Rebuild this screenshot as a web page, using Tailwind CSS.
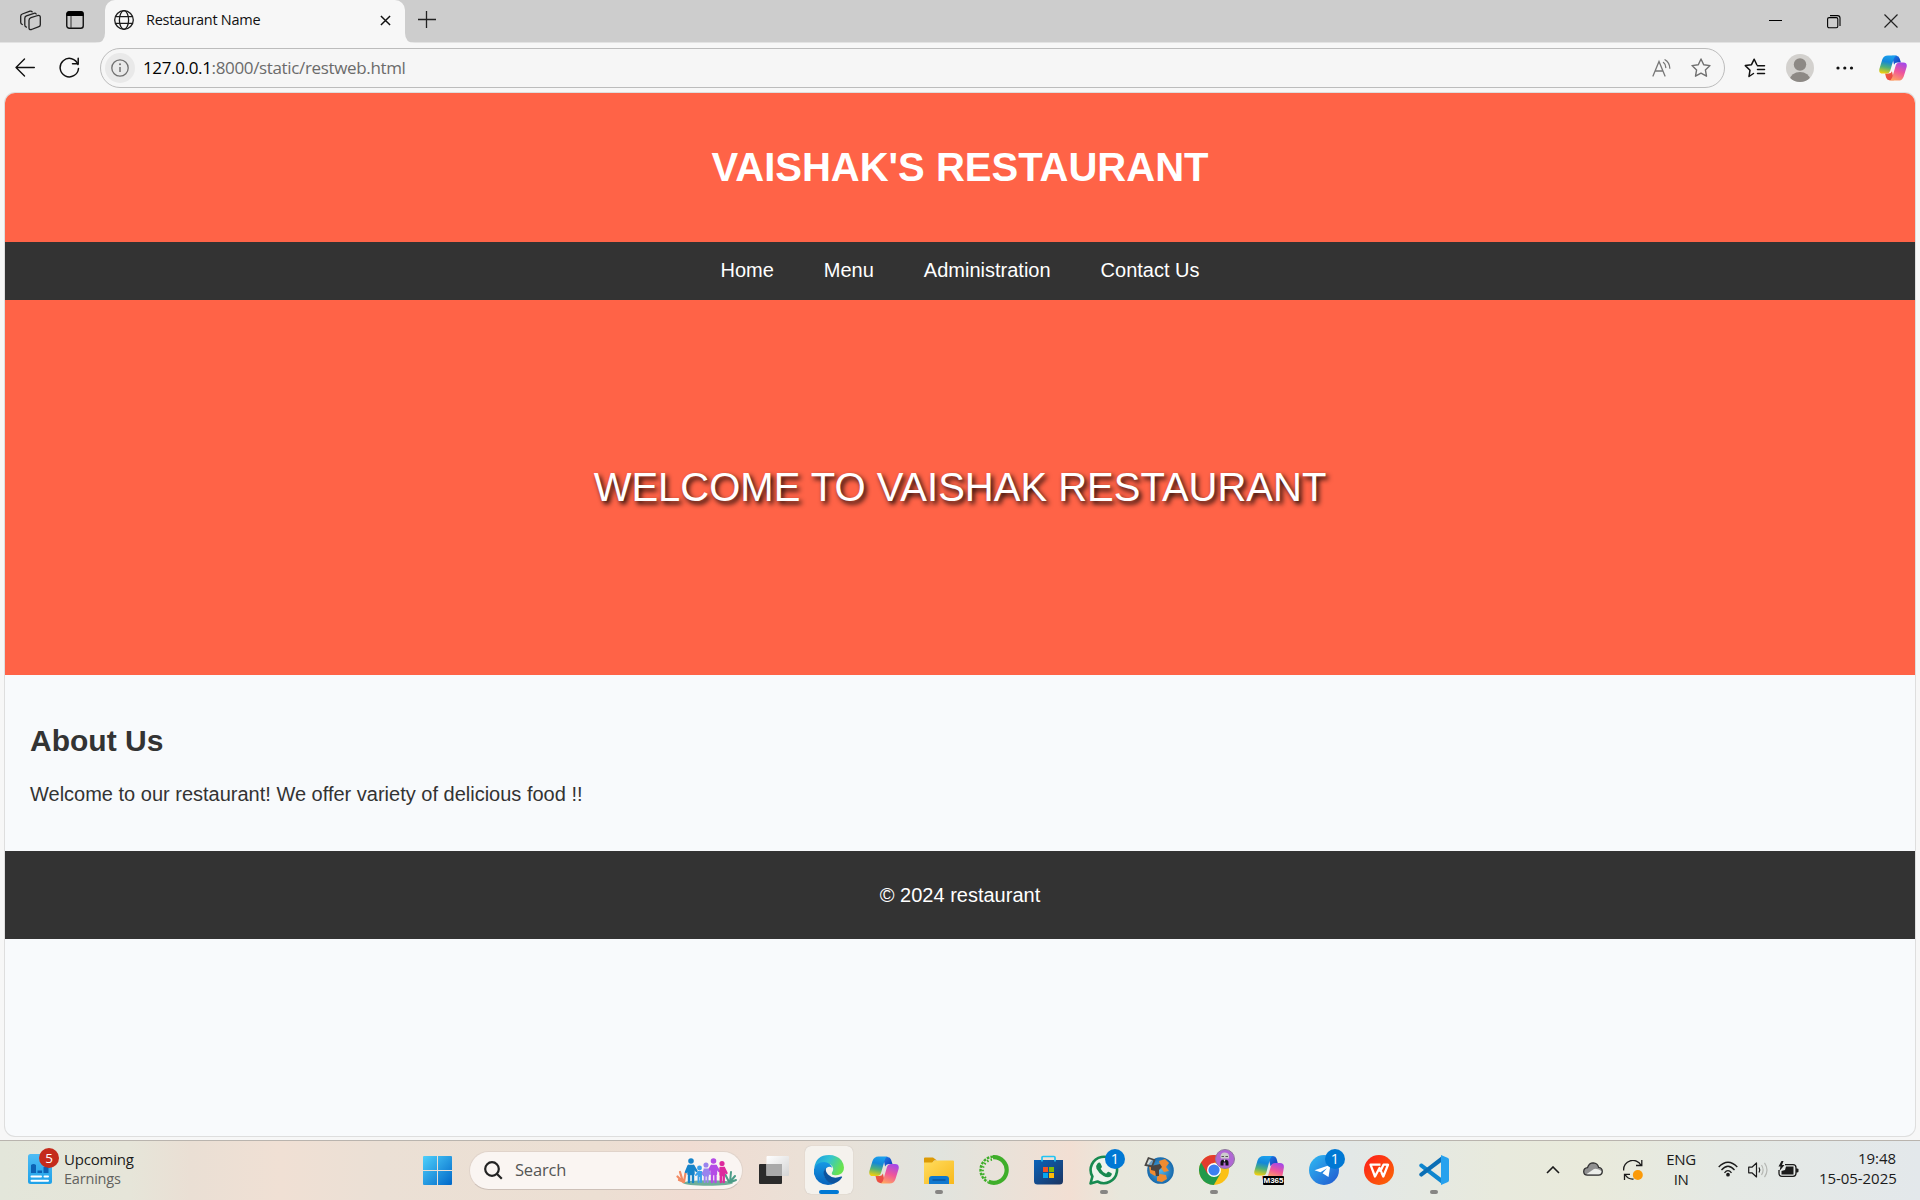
<!DOCTYPE html>
<html lang="en">
<head>
<meta charset="utf-8">
<title>Restaurant Name</title>
<script src="https://cdn.jsdelivr.net/npm/@tailwindcss/browser@4"></script>
</head>
<body class="w-[1920px] h-[1200px] overflow-hidden bg-[#f7f7f7] flex flex-col font-['Open_Sans','Noto_Sans',sans-serif]">

<!-- Shared gradients and symbols -->
<svg width="0" height="0" class="absolute">
  <defs>
    <linearGradient id="cpA" x1=".5" y1="0" x2=".3" y2="1"><stop offset="0" stop-color="#1aa0ee"/><stop offset=".35" stop-color="#1487d8"/><stop offset=".65" stop-color="#4fb079"/><stop offset="1" stop-color="#f4d00c"/></linearGradient>
    <linearGradient id="cpB" x1=".7" y1="0" x2=".3" y2="1"><stop offset="0" stop-color="#a548e8"/><stop offset=".5" stop-color="#f0569a"/><stop offset="1" stop-color="#ffa45f"/></linearGradient>
    <linearGradient id="cpC" x1="0" y1="0" x2="1" y2="1"><stop offset="0" stop-color="#1e7fe8"/><stop offset="1" stop-color="#1136b8"/></linearGradient>
    <linearGradient id="cpD" x1="0" y1="0" x2="1" y2="1"><stop offset="0" stop-color="#f0603a"/><stop offset="1" stop-color="#e8434a"/></linearGradient>
    <linearGradient id="win" x1="0" y1="0" x2="1" y2="1"><stop offset="0" stop-color="#4fd0fb"/><stop offset="1" stop-color="#0067c8"/></linearGradient>
    <symbol id="copilot" viewBox="0 0 30 28">
      <path d="M14 1h4.500q2.800 0 3.600 2.700L23.500 8h-4q-2.500 0-3.400 2.600Z" fill="url(#cpC)"/>
      <path d="M16 27h-5q-2.500 0-3.400-2.700L6.500 20h4q2.500 0 3.400-2.600Z" fill="url(#cpD)"/>
      <path d="M9.500.5h10q-2.800.3-3.700 3.500L12 17q-1 3-4 3H4Q-.6 20 .4 15L3.500 5Q5 .5 9.500.5Z" fill="url(#cpA)"/>
      <path d="M20.500 27.500h-10q2.800-.3 3.700-3.500L18 11q1-3 4-3h4q4.600 0 3.600 5l-3.100 10q-1.500 4.500-6 4.500Z" fill="url(#cpB)"/>
    </symbol>
  </defs>
</svg>

<!-- Tab strip -->
<div class="h-[43px] shrink-0 bg-[#cdcdcd] border-b border-[#e3e3e3] flex">
  <div class="w-[105px] h-[42px] flex items-start shrink-0">
    <svg class="ml-5 mt-2.5" width="22" height="22" viewBox="0 0 22 22" fill="none" stroke="#222" stroke-width="1.300" stroke-linejoin="round" stroke-linecap="round"><path d="M11 7.700 17.800 5.500Q20.300 5 20.300 7.300v7.400q0 1.500-1.400 2L11.500 19.500Q9 20 9 18V10.200q0-1.800 2-2.500Z"/><path d="M6.400 17.200Q4.800 16.600 4.800 15V8.200q0-1.700 1.600-2.300L14 3.300q1.500-.4 2.200.7M2.300 14.500Q.7 13.800.7 12.200V6.300q0-1.700 1.600-2.300L10 1.200q1.500-.3 2.200.6"/></svg>
    <svg class="ml-6 mt-[11px]" width="18" height="18" viewBox="0 0 18 18"><rect x=".75" y=".75" width="16.500" height="16.500" rx="2.500" fill="none" stroke="#111" stroke-width="1.400"/><path d="M.5 5V3Q.5.300 3 .300h12q2.500 0 2.500 2.700v2Z" fill="#000"/><path d="M5 5v12" stroke="#333" stroke-width="1"/></svg>
  </div>
  <div class="relative w-[300px] h-[43px] bg-[#f7f7f7] rounded-t-[10px] flex items-start shrink-0">
    <svg class="absolute -left-2.5 bottom-0" width="10" height="10"><path d="M10 0v10H0Q10 10 10 0Z" fill="#f7f7f7"/></svg>
    <svg class="absolute -right-2.5 bottom-0" width="10" height="10"><path d="M0 0v10h10Q0 10 0 0Z" fill="#f7f7f7"/></svg>
    <svg class="ml-[9px] mt-[10px] shrink-0" width="20" height="20" viewBox="0 0 20 20" fill="none" stroke="#1c1c1c" stroke-width="1.300"><circle cx="10" cy="10" r="9.300"/><ellipse cx="10" cy="10" rx="4.600" ry="9.300"/><path d="M1.400 6.700h17.200M1.400 13.300h17.200"/></svg>
    <div class="ml-3 mt-[10px] w-[220px] text-[14.500px] leading-5 tracking-[-0.28px] text-[#111]">Restaurant Name</div>
    <svg class="ml-[14px] mt-[15px] shrink-0" width="11" height="11" viewBox="0 0 12 12"><path d="m1 1 10 10M11 1 1 11" stroke="#111" stroke-width="1.600"/></svg>
  </div>
  <svg class="ml-[13px] mt-[11px]" width="18" height="18"><path d="M0 8.500h18M8.500 0v17" stroke="#222" stroke-width="1.300"/></svg>
  <div class="ml-auto mr-[22px] flex gap-[43px] items-start">
    <svg class="mt-5 mr-px" width="14" height="2"><path d="M0 .5h13" stroke="#000"/></svg>
    <svg class="mt-[15px]" width="14" height="14" fill="none" stroke="#000" stroke-width="1.100"><rect x=".6" y="2.600" width="10.200" height="10.200" rx="1.500"/><path d="M3 .6h7.500q2.500 0 2.500 2.500V11"/></svg>
    <svg class="mt-[14px]" width="14" height="14"><path d="m.5.500 13 13M13.500.500l-13 13" stroke="#222" stroke-width="1.200"/></svg>
  </div>
</div>

<!-- Toolbar -->
<div class="h-[50px] shrink-0 flex items-start">
  <svg class="ml-[15px] mt-[15px]" width="20" height="19" viewBox="0 0 20 19" fill="none" stroke="#111" stroke-width="1.400" stroke-linecap="round" stroke-linejoin="round"><path d="M19.300 9.500H1M9.500 1 1 9.500 9.500 18"/></svg>
  <svg class="ml-[24px] mt-[14px]" width="21" height="22" viewBox="0 0 21 22" fill="none" stroke="#111" stroke-width="1.500" stroke-linecap="round" stroke-linejoin="round"><path d="M19 7.500A9.200 9.200 0 1 0 19.500 11.500"/><path d="M13.500 6.800h5.700V1.200"/></svg>
  <div class="ml-[20px] mt-[5px] w-[1625px] h-[40px] rounded-full border border-[#bcbcbc] bg-[#f6f6f6] flex items-center">
    <div class="ml-1 size-[30px] rounded-full bg-[#e9e9e9] grid place-items-center"><svg width="18" height="18" viewBox="0 0 18 18"><circle cx="9" cy="9" r="8.200" fill="none" stroke="#707070" stroke-width="1.300"/><path d="M9 8v5" stroke="#707070" stroke-width="1.500"/><circle cx="9" cy="5.300" r="1" fill="#707070"/></svg></div>
    <div class="ml-2 text-[17px] leading-6 tracking-[-0.35px] text-[#6b6b6b] whitespace-nowrap"><span class="text-black">127.0.0.1</span>:8000/static/restweb.html</div>
    <div class="ml-auto mr-[13px] flex items-center gap-[20px]">
      <svg width="19" height="18" viewBox="0 0 19 18" fill="none" stroke="#777" stroke-width="1.300" stroke-linecap="round"><path d="M1 17 7 2.500 13 17M3.200 12h7.600M11.500 3.500q2.300 1.700 2.300 5M13 .8q4.500 2.600 4.800 8.400"/></svg>
      <svg width="20" height="20" viewBox="0 0 20 20" fill="none" stroke="#707070" stroke-width="1.400" stroke-linejoin="round"><path d="m10 1 2.700 5.700 6.300.9-4.600 4.300 1.100 6.300L10 15.200l-5.500 3 1.100-6.300L1 7.600l6.300-.9Z"/></svg>
    </div>
  </div>
  <svg class="ml-[19px] mt-[15px]" width="22" height="20" viewBox="0 0 22 20" fill="none" stroke="#111" stroke-width="1.500" stroke-linejoin="round" stroke-linecap="round"><path d="M9.500 15.500 5 18.500l1-6.300L1.300 7.600l6.200-.9L10.200 1.200l2.600 5.500M13.500 7.700h7M13.500 11.500h7M13.500 15.500h7"/></svg>
  <svg class="ml-5 mt-[11px]" width="28" height="28" viewBox="0 0 28 28"><defs><clipPath id="av"><circle cx="14" cy="14" r="14"/></clipPath></defs><g clip-path="url(#av)"><rect width="28" height="28" fill="#d3d1ce"/><circle cx="14" cy="10.500" r="6.200" fill="#8d8985"/><ellipse cx="14" cy="25.500" rx="10" ry="7.500" fill="#8d8985"/></g></svg>
  <svg class="ml-[22px] mt-[23px]" width="18" height="4"><g fill="#111"><circle cx="2" cy="2" r="1.600"/><circle cx="8.800" cy="2" r="1.600"/><circle cx="15.500" cy="2" r="1.600"/></g></svg>
  <svg class="ml-[25px] mt-[11px]" width="28" height="28"><use href="#copilot"/></svg>
</div>

<!-- Web page -->
<div class="mx-[5px] h-[1043px] shrink-0 rounded-[10px] overflow-hidden bg-[#f8fafc] shadow-[0_0_0_1px_#dedede] font-['Liberation_Sans',Arial,sans-serif] text-xl text-[#333]">
  <header class="h-[149px] bg-[#ff6347] text-white flex justify-center items-center pb-px"><h1 class="text-[40px] leading-[45px] font-bold">VAISHAK'S RESTAURANT</h1></header>
  <nav class="h-[58px] bg-[#333] text-white flex justify-center items-center gap-[50px] text-[20px] leading-[23px] pb-0.5"><a>Home</a><a>Menu</a><a>Administration</a><a>Contact Us</a></nav>
  <section class="h-[375px] bg-[#ff6347] text-white flex justify-center items-center"><div class="text-[40px] leading-[45px] [text-shadow:2.5px_2.5px_5px_rgba(0,0,0,0.95)]">WELCOME TO VAISHAK RESTAURANT</div></section>
  <section class="h-[176px] px-[25px] pt-[49px]">
    <h2 class="text-[30px] leading-[34px] font-bold">About Us</h2>
    <p class="mt-[25px] leading-[23px]">Welcome to our restaurant! We offer variety of delicious food !!</p>
  </section>
  <footer class="h-[88px] bg-[#333] text-white flex justify-center items-center leading-[23px]">© 2024 restaurant</footer>
</div>

<!-- Taskbar -->
<div class="mt-1 h-[60px] shrink-0 border-t border-[#b9b4ae] pb-px flex items-center text-[#1b1b1b] bg-[linear-gradient(90deg,#e3e6da_0px,#e6e5d9_130px,#eadfd4_190px,#f0e0d4_280px,#ebe0d5_380px,#ecdfd3_600px,#f0dcd2_690px,#ebe0d6_800px,#e1e4de_940px,#f2dfd3_1070px,#e8e7dc_1120px,#e6e9e0_1220px,#e3e8e7_1350px,#e8eadd_1500px,#e9eadb_1590px,#e5e9e4_1720px,#e3e8eb_1920px)]">
  <div class="w-[423px] shrink-0 flex items-center pl-7">
    <div class="relative -mt-0.5">
      <svg width="24" height="30" viewBox="0 0 24 30"><defs><linearGradient id="wd" x1="0" y1="0" x2="0" y2="1"><stop offset="0" stop-color="#4dbcf5"/><stop offset="1" stop-color="#1ea1e8"/></linearGradient></defs><rect width="24" height="30" rx="2.500" fill="url(#wd)"/><path d="M3 11q2.500-2 5 0v8H3ZM9.500 16.500h4.500V19H9.500ZM15.500 13h5v6h-5Z" fill="#0c62b4"/><path d="M3.500 22.500h9.500M16.500 22.500h3.500M3.500 26.800h16.500" stroke="#fff" stroke-width="2" stroke-linecap="round"/></svg>
      <div class="absolute left-[11px] -top-[6px] size-5 rounded-full bg-[#c42b1c] text-white text-[13.500px] leading-5 text-center">5</div>
    </div>
    <div class="ml-3 -mt-[3px] text-[15px] leading-5 tracking-[-0.2px]"><div>Upcoming</div><div class="text-[14.500px] text-[#62625e]">Earnings</div></div>
  </div>
  <svg class="shrink-0" width="29" height="29" viewBox="0 0 29 29"><path fill="url(#win)" d="M1 0h13v14H0V1Q0 0 1 0ZM15 0h13q1 0 1 1v13H15ZM0 15h14v14H1q-1 0-1-1ZM15 15h14v13q0 1-1 1H15Z"/></svg>
  <div class="ml-[17px] w-[274px] h-[39px] shrink-0 rounded-full bg-[#faf5f2] border border-[#e0d3ca] border-b-[#cdc0b8] flex items-center">
    <svg class="ml-[14px]" width="19" height="19" viewBox="0 0 19 19" fill="none" stroke="#222" stroke-width="2.200"><circle cx="8" cy="8" r="6.800"/><path d="m12.800 12.800 5 5"/></svg>
    <div class="ml-3 text-[16.500px] leading-5 text-[#555] tracking-[-0.2px]">Search</div>
    <svg class="ml-auto mr-[5px] mt-[3px]" width="61" height="28" viewBox="0 0 61 28">
      <ellipse cx="32" cy="25" rx="25" ry="2.800" fill="#6fae99"/>
      <g stroke="#f28a63" stroke-width="2.200" stroke-linecap="round"><path d="M7 24 1.500 18.500M7 24 4 14M8 24l1.500-9M3 22l5 2"/></g>
      <g stroke="#4c9c88" stroke-width="2" stroke-linecap="round"><path d="m53 24-3.500-7M54 24l1-10M54 24l5-6M55 24l5-2"/></g>
      <g stroke-linecap="round" stroke-linejoin="round" stroke-width="2.400">
        <g fill="#1683c9" stroke="#1683c9"><circle cx="15" cy="3" r="1.600"/><path d="M12.500 8h5v8h-5ZM12.500 8 10 14M17.500 8 20.500 13M13 16v8M17 16v8"/></g>
        <g fill="#b44be6" stroke="#b44be6"><circle cx="37.500" cy="3" r="1.600"/><path d="M35.500 8h4.500v8h-4.500ZM35.500 8l-3 5M40 8l3 5M36 16v8M39.500 16v8"/></g>
        <g fill="#dd2a9d" stroke="#dd2a9d"><circle cx="46" cy="5.500" r="1.400"/><path d="M44.500 10h3.500v7h-3.500ZM48 10l2.500 5M44.800 17v7M47.700 17v7"/></g>
      </g>
      <g stroke-linecap="round" stroke-width="1.900">
        <g fill="#3aa0ea" stroke="#3aa0ea"><circle cx="23.500" cy="10" r="1.500"/><path d="M22.500 14h2.500v4h-2.500ZM22.500 14l-2.500 3M25 14l2.500 3M22.500 18v6M25 18v6"/></g>
        <g fill="#9a83ee" stroke="#9a83ee"><circle cx="30" cy="7" r="1.600"/><path d="M28.500 11.500h3.500v6h-3.500ZM28.500 12 26.500 16M32 12l2 4M28.700 18v6M31.600 18v6"/></g>
      </g>
    </svg>
  </div>

  <div class="ml-[7px] flex gap-[7px] shrink-0">
    <div class="w-12 h-12 flex items-center justify-center"><svg width="30" height="28" viewBox="0 0 30 28"><defs><linearGradient id="tv" x1="0" y1="0" x2="1" y2="1"><stop offset="0" stop-color="#fff"/><stop offset="1" stop-color="#d4d4d4"/></linearGradient></defs><rect y="8" width="23" height="20" rx="1" fill="#2b2b2b"/><rect x="7.500" y="0" width="22.500" height="20" rx="1" fill="url(#tv)"/><path d="M7.500 8H23v12H7.500Z" fill="#aaa"/></svg></div>

    <div class="relative w-12 h-12 rounded-md bg-[#f5f2ed] shadow-[0_0_1px_#b5aca5] flex items-center justify-center">
      <svg width="30" height="30" viewBox="0 0 30 30"><defs><linearGradient id="eg" x1="0" y1="0" x2="1" y2=".4"><stop offset="0" stop-color="#179ae0"/><stop offset=".5" stop-color="#32c3d4"/><stop offset="1" stop-color="#69e34f"/></linearGradient><linearGradient id="eb" x1="0" y1="0" x2="0" y2="1"><stop offset="0" stop-color="#1699e4"/><stop offset="1" stop-color="#0863bc"/></linearGradient></defs>
        <path d="M.2 13Q2 0 15 0q8 0 12.500 5.500 4 6 1.500 11-2.500 4-8 3.700-4-.3-3-2.700 3-4.500-1.500-8Q9 5 .2 13Z" fill="url(#eg)"/>
        <path d="M0 14Q2.500 7 10 7q6 0 8.500 6-3-2.500-6 0-4.500 4-1.200 9.500Q15 28.500 21 28q-3 2-7 2Q3 29.500 0 19Z" fill="url(#eb)"/>
        <path d="M12 13q-4 3.500-1.500 9Q14 29 20 28.500q5-1.500 8-6 .5-1.500-1-1-8 3-13-2-3-3.500-2-6.500Z" fill="#0d549f"/></svg>
      <span class="absolute bottom-0 left-[14px] w-5 h-1 rounded-full bg-[#0078d4]"></span>
    </div>

    <div class="w-12 h-12 flex items-center justify-center"><svg width="30" height="28"><use href="#copilot"/></svg></div>

    <div class="relative w-12 h-12 flex items-center justify-center">
      <svg width="30" height="27" viewBox="0 0 30 27"><defs><linearGradient id="fo" x1="0" y1="0" x2="1" y2="1"><stop offset="0" stop-color="#ffdc5e"/><stop offset="1" stop-color="#f9b91c"/></linearGradient></defs><path d="M0 1.500Q0 .5 1 .5h8l4 3h-3L8 7H0Z" fill="#dc9a06"/><path d="M0 5.500h8l3-2h18q1 0 1 1V27H0Z" fill="url(#fo)"/><path d="M5 27v-5q0-3 3-3h14q3 0 3 3v5Z" fill="#0f78cf"/><path d="M8.500 23h13" stroke="#0a4f97" stroke-width="1.300"/></svg>
      <span class="absolute bottom-0 left-5 w-2 h-1 rounded-full bg-[#868583]"></span>
    </div>

    <div class="w-12 h-12 flex items-center justify-center"><svg width="30" height="30" viewBox="0 0 30 30" fill="none" stroke="#3fae2a"><path d="M14 2.200a12.800 12.800 0 1 1-4.500 24.400" stroke-width="4.200"/><path d="M14 1.600A13.400 13.400 0 0 0 9 27" stroke-width="2.400" stroke-dasharray="2.600 1.200"/><path d="M13 4.500A11 11 0 0 0 8.500 24.500" stroke-width="2.400" stroke-dasharray="1.500 2.200"/></svg></div>

    <div class="w-12 h-12 flex items-center justify-center"><svg class="mr-px" width="29" height="30" viewBox="0 0 29 30"><defs><linearGradient id="st" x1="0" y1="0" x2="1" y2="1"><stop offset="0" stop-color="#0a63ba"/><stop offset="1" stop-color="#1c3461"/></linearGradient></defs><path d="M0 5h29V26q0 3.500-3.500 3.500h-22Q0 29.500 0 26Z" fill="url(#st)"/><path d="M8 6.500V2.500Q8 1.500 9 1.500h11q1 0 1 1v4" fill="none" stroke="#22c4f4" stroke-width="1.700"/><path d="M9 12h5v5H9Z" fill="#f35325"/><path d="M15 12h5v5h-5Z" fill="#81bc06"/><path d="M9 18h5v5H9Z" fill="#05a6f0"/><path d="M15 18h5v5h-5Z" fill="#ffba08"/></svg></div>

    <div class="relative w-12 h-12 flex items-center justify-center">
      <svg width="30" height="30" viewBox="0 0 30 30"><path d="M1.500 28.500 3.400 21.500A13.200 13.200 0 1 1 8.500 26.500Z" fill="#eef4ec" stroke="#178a50" stroke-width="2.600" stroke-linejoin="round"/><path d="M8.500 8.500q2-2 3.200.2l1.200 2.700q.2.800-1.300 2.300 2 3.600 5.500 5 1.700-2.200 2.500-1.900l3 1.500q.8.800-.8 2.900-2.700 2.300-7.300-.3-5-3-7-7.200-1-3.300 1-5.200Z" fill="#178a50"/></svg>
      <div class="absolute left-[25px] top-[3px] size-5 rounded-full bg-[#0078d4] text-white text-[14.500px] leading-5 text-center">1</div>
      <span class="absolute bottom-0 left-5 w-2 h-1 rounded-full bg-[#868583]"></span>
    </div>

    <div class="w-12 h-12 flex items-center justify-center"><svg width="30" height="28" viewBox="0 0 30 28"><defs><radialGradient id="gl"><stop offset="0" stop-color="#55b4e8"/><stop offset="1" stop-color="#1669ac"/></radialGradient></defs><circle cx="16.500" cy="14.500" r="13.300" fill="url(#gl)"/><path d="m15 5 6-2 4 4-3 4 3 4-5 1-3-4ZM16 18l6 1 1 4-5 3-5-1v-4ZM5 10l8 2 1 4-3 4-5-3Z" fill="#ef8b31"/><path d="m1.500 9 3-7 6 2-2.500 6.500Z" fill="#c8d4d8" fill-opacity=".5" stroke="#4a4744" stroke-width="1.800"/><path d="m7 10 9-2 2 3-3 3v6h-3l-1-5-4-1Z" fill="#4a4441"/></svg></div>

    <div class="relative w-12 h-12 flex items-center justify-center">
      <svg width="30" height="30" viewBox="0 0 30 30"><circle cx="15" cy="15" r="15" fill="#fbc116"/><path d="M15 15 2 7.500A15 15 0 0 0 14.800 30L21.500 18.500Z" fill="#229a4a"/><path d="M2 7.500A15 15 0 0 1 28 7.500H15L8.500 18.800Z" fill="#e33b2e"/><circle cx="15" cy="15" r="7" fill="#fff"/><circle cx="15" cy="15" r="5.600" fill="#3c7ff0"/></svg>
      <svg class="absolute left-[25px] top-[3px]" width="20" height="20" viewBox="0 0 20 20"><circle cx="10" cy="10" r="9.500" fill="#b067d4" stroke="#8f7a9c"/><path d="M5.500 8q0-4.500 4-4.500t4.500 3v3H6Z" fill="#ccc"/><path d="M5.500 16.500v-3q0-3 4-3t4 3v3h-3v-3h-2v3Z" fill="#16141a"/><path d="M6.500 7.500h2.500M10.500 7.500H13" stroke="#555"/><path d="M8.500 10.500h2l-1 2.500Z" fill="#fff"/></svg>
      <span class="absolute bottom-0 left-5 w-2 h-1 rounded-full bg-[#868583]"></span>
    </div>

    <div class="relative w-12 h-12 flex items-center justify-center"><svg width="30" height="28" viewBox="0 0 30 28"><path d="M14 0h5q2.800 0 3.600 2.700L24 8h-4q-2.500 0-3.400 2.600Z" fill="url(#cpC)"/><path d="M9.500 0h10q-2.800.3-3.700 3.500L12.500 16q-.8 3.500-4 3.500H4Q-.6 19.500.4 15L3.500 4.500Q5 0 9.500 0Z" fill="url(#cpA)"/><path d="M8 20h5l-2 5H9Z" fill="#f0603a"/><path d="M12 22q2-1 2.500-4L17 10q1-3 4-3h5q4.600 0 3.800 5L28 22Z" fill="url(#cpB)"/></svg>
      <div class="absolute left-[18px] top-[30px] w-[21px] h-[9px] rounded-[1px] bg-black text-white font-bold text-[8px] leading-[9px] text-center font-['Liberation_Sans',sans-serif]">M365</div>
    </div>

    <div class="relative w-12 h-12 flex items-center justify-center">
      <svg width="30" height="30" viewBox="0 0 30 30"><defs><linearGradient id="tg" x1="0" y1="0" x2="1" y2="1"><stop offset="0" stop-color="#2fbcf3"/><stop offset="1" stop-color="#2156cf"/></linearGradient></defs><circle cx="15" cy="15" r="15" fill="url(#tg)"/><path d="M5.500 15.200 21.500 9.700l-2 12.300-6-3.800 4.500-5-6.500 4Z" fill="#fff"/></svg>
      <div class="absolute left-[25px] top-[3px] size-5 rounded-full bg-[#0078d4] text-white text-[14.500px] leading-5 text-center">1</div>
    </div>

    <div class="w-12 h-12 flex items-center justify-center"><svg width="30" height="30" viewBox="0 0 30 30"><defs><linearGradient id="wp" x1="0" y1="0" x2="1" y2="1"><stop offset="0" stop-color="#fe1c1c"/><stop offset="1" stop-color="#fb6a05"/></linearGradient></defs><circle cx="15" cy="15" r="15" fill="url(#wp)"/><path d="M16.500 9.700H6.500L11 21.500l4.500-8.500 3.800 8.500L24 9.700h-4.500L16 17" fill="none" stroke="#fff" stroke-width="2.300" stroke-linejoin="round"/></svg></div>

    <div class="relative w-12 h-12 flex items-center justify-center">
      <svg width="30" height="30" viewBox="0 0 30 30"><path d="M.5 9.500q1-1.500 2.500-1L23 23.500V29L1 12Q-.3 11 .5 9.500Z" fill="#0f86cf"/><path d="M.5 20.500q1 1.500 2.500 1L23 6.500V1L1 18q-1.300 1-.5 2.500Z" fill="#0a6eb5"/><path d="M22 0l7 3q1 .5 1 2v20q0 1.500-1 2l-7 3Z" fill="#26a1ee"/></svg>
      <span class="absolute bottom-0 left-5 w-2 h-1 rounded-full bg-[#868583]"></span>
    </div>
  </div>

  <!-- System tray -->
  <div class="ml-auto mr-6 -mt-px flex items-center shrink-0">
    <svg width="14" height="8" viewBox="0 0 14 8"><path d="m1 7 6-6 6 6" fill="none" stroke="#1b1b1b" stroke-width="1.600"/></svg>
    <svg class="ml-[23px] -mt-0.5" width="20" height="14" viewBox="0 0 20 14"><path d="M4.500 13.200Q.7 13 .7 9.500.9 6 4.500 5.700 6 .8 10.200.8q4.500.2 5.400 4.600 3.600.5 3.700 3.900 0 3.700-3.800 3.900Z" fill="#909090"/><path d="m3 12.500 8-5.500q4-1 8 2.500-.5 3-3.500 3.200Z" fill="#eceeea"/><path d="M4.500 13.200Q.7 13 .7 9.500.9 6 4.500 5.700 6 .8 10.200.8q4.500.2 5.400 4.600 3.600.5 3.700 3.900 0 3.700-3.800 3.900Z" fill="none" stroke="#333" stroke-width="1.300"/></svg>
    <svg class="ml-5" width="20" height="20" viewBox="0 0 20 20" fill="none"><path d="M.7 10.500A9.200 9.200 0 0 1 18 5.300M18.800 0v5.500H13M1.500 20v-5.700h5.500M2 14.500q3 5 8.500 4.500" stroke="#1b1b1b" stroke-width="1.300"/><circle cx="14.800" cy="15" r="5" fill="#fb9a09"/></svg>
    <div class="ml-[21px] w-[34px] -mt-0.5 text-center text-[15px] leading-5 tracking-[-0.4px]"><div>ENG</div><div>IN</div></div>
    <svg class="ml-5 -mt-0.5" width="20" height="16" viewBox="0 0 20 16" fill="none" stroke="#1b1b1b" stroke-width="1.300"><path d="M.7 6Q10-3.500 19.300 6M3.500 9Q10 1.500 16.500 9M6.500 11.800Q10 7.500 13.500 11.800"/><circle cx="10" cy="13.700" r="1.200" fill="#1b1b1b"/></svg>
    <svg class="ml-[10px]" width="20" height="16" viewBox="0 0 20 16" fill="none" stroke="#1b1b1b" stroke-width="1.200" stroke-linejoin="round"><path d="M.7 5.200h3.200L8.500 1v14l-4.600-4.200H.7Z"/><path d="M11 5.500q1.600 2.500 0 5"/><path d="M13.500 3q3.200 5 0 10M16.500.8q5 7.200 0 14.400" stroke="#b5b7b3"/></svg>
    <svg class="ml-[10px] -mt-0.5" width="21" height="16" viewBox="0 0 21 16"><path d="M7 3.700h8q3 0 3 3v5.600q0 3-3 3H4q-3 0-3-3V9" fill="none" stroke="#1b1b1b" stroke-width="1.300"/><path d="M8 5.500h7.500v8H3.500V10L7 9Z" fill="#1b1b1b"/><path d="M18 7.500h1q1.500 0 1.500 1v2q0 1-1.500 1h-1Z" fill="#1b1b1b"/><path d="M3.500 0 .5 5.500h2L1.500 10 6.500 4H4L5.500 0Z" fill="#1b1b1b"/></svg>
    <div class="ml-5 -mt-[3px] w-[77px] text-right text-[15px] leading-5 tracking-[-0.06px] whitespace-nowrap"><div>19:48</div><div>15-05-2025</div></div>
  </div>
</div>
</body>
</html>
